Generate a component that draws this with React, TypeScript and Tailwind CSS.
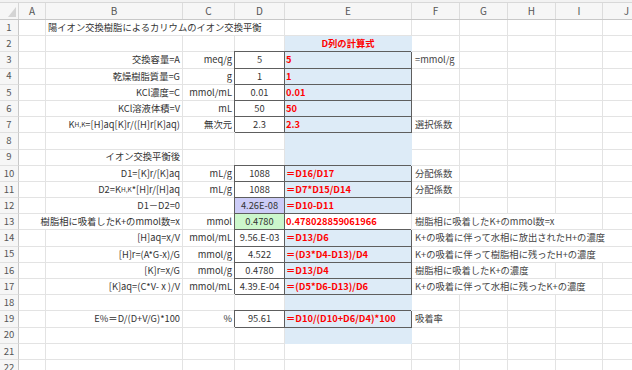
import type { ReactNode } from 'react';

type RowSpec = {
  b?: ReactNode;
  bSpan?: 'AB' | 'BD';
  c?: string;
  d?: string;
  dBox?: boolean;
  dBg?: string;
  e?: ReactNode;
  eBox?: boolean;
  eFill?: boolean;
  eCenter?: boolean;
  f?: string;
  fSpan?: 1 | 3 | 4 | 5;
};

const grid = 'border-r border-b border-[#e3e3e3]';
const boxed = 'border-r border-b border-[#5e5e5e] shadow-[-1px_-1px_0_0_#5e5e5e]';
const cellBase = 'h-full shrink-0 flex items-center whitespace-nowrap overflow-visible';

const KHK = (
  <>
    K<span className="text-[6.5px]">H,K</span>
  </>
);

const red = (s: string) => <span className="font-bold text-[#ff0000]">{s}</span>;

const rows: RowSpec[] = [
  { b: '陽イオン交換樹脂によるカリウムのイオン交換平衡', bSpan: 'BD' },
  { e: 'D列の計算式', eFill: true, eCenter: true },
  { b: '交換容量=A', c: 'meq/g', d: '5', dBox: true, e: red('5'), eBox: true, f: '=mmol/g' },
  { b: '乾燥樹脂質量=G', c: 'g', d: '1', dBox: true, e: red('1'), eBox: true },
  { b: 'KCl濃度=C', c: 'mmol/mL', d: '0.01', dBox: true, e: red('0.01'), eBox: true },
  { b: 'KCl溶液体積=V', c: 'mL', d: '50', dBox: true, e: red('50'), eBox: true },
  { b: <>{KHK}=[H]aq[K]r/([H]r[K]aq)</>, c: '無次元', d: '2.3', dBox: true, e: red('2.3'), eBox: true, f: '選択係数' },
  { eFill: true },
  { b: 'イオン交換平衡後', eFill: true },
  { b: 'D1=[K]r/[K]aq', c: 'mL/g', d: '1088', dBox: true, e: red('＝D16/D17'), eBox: true, f: '分配係数' },
  { b: <>D2={KHK}*[H]r/[H]aq</>, c: 'mL/g', d: '1088', dBox: true, e: red('＝D7*D15/D14'), eBox: true, f: '分配係数' },
  { b: 'D1－D2=0', d: '4.26E-08', dBox: true, dBg: 'bg-[#ccccf7]', e: red('＝D10-D11'), eBox: true },
  { b: '樹脂相に吸着したK+のmmol数=x', bSpan: 'AB', c: 'mmol', d: '0.4780', dBox: true, dBg: 'bg-[#ccf7cc]', e: red('0.478028859061966'), f: '樹脂相に吸着したK+のmmol数=x', fSpan: 4 },
  { b: '[H]aq=x/V', c: 'mmol/mL', d: '9.56.E-03', dBox: true, e: red('＝D13/D6'), eBox: true, f: 'K+の吸着に伴って水相に放出されたH+の濃度', fSpan: 5 },
  { b: '[H]r=(A*G-x)/G', c: 'mmol/g', d: '4.522', dBox: true, e: red('＝(D3*D4-D13)/D4'), eBox: true, f: 'K+の吸着に伴って樹脂相に残ったH+の濃度', fSpan: 5 },
  { b: '[K]r=x/G', c: 'mmol/g', d: '0.4780', dBox: true, e: red('＝D13/D4'), eBox: true, f: '樹脂相に吸着したK+の濃度', fSpan: 3 },
  { b: '[K]aq=(C*V- x )/V', c: 'mmol/mL', d: '4.39.E-04', dBox: true, e: red('＝(D5*D6-D13)/D6'), eBox: true, f: 'K+の吸着に伴って水相に残ったK+の濃度', fSpan: 4 },
  { eFill: true },
  { b: 'E%＝D/(D+V/G)*100', c: '%', d: '95.61', dBox: true, e: red('＝D10/(D10+D6/D4)*100'), eBox: true, f: '吸着率' },
  { eFill: true },
  {},
  {},
];

const fWidth: Record<number, string> = {
  1: 'w-[48px]',
  3: 'w-[144px]',
  4: 'w-[191px]',
  5: 'w-[239px]',
};

const tailCols = [
  { key: 'G', w: 'w-[48px]' },
  { key: 'H', w: 'w-[48px]' },
  { key: 'I', w: 'w-[47px]' },
  { key: 'J', w: 'w-[48px]' },
];

const Row = ({ n, r }: { n: number; r: RowSpec }) => {
  const span = r.fSpan ?? 1;
  const eCls = r.eBox
    ? boxed + ' bg-[#ddebf7]'
    : r.eFill
      ? 'border-r border-b border-[#ddebf7] bg-[#ddebf7]'
      : grid;

  return (
    <div className="flex h-[16.2px]">
      <div className="w-[19px] h-full shrink-0 flex items-center justify-center text-[9.5px] text-[#555] bg-[#f6f6f6] border-r border-b border-r-[#c8c8c8] border-b-[#e0e0e0]">
        {n}
      </div>

      {r.bSpan === 'AB' ? (
        <div className={`${cellBase} ${grid} w-[164px] justify-end pr-[2px]`}>{r.b}</div>
      ) : (
        <>
          <div className={`${cellBase} ${grid} w-[27px]`} />
          {r.bSpan === 'BD' ? (
            <div className={`${cellBase} ${grid} w-[239px] pl-[2px]`}>{r.b}</div>
          ) : (
            <div className={`${cellBase} ${grid} w-[137px] justify-end pr-[2px]`}>{r.b}</div>
          )}
        </>
      )}

      {r.bSpan !== 'BD' && (
        <>
          <div className={`${cellBase} ${grid} w-[52px] justify-end pr-[2px]`}>{r.c}</div>
          <div className={`${cellBase} ${r.dBox ? boxed : grid} ${r.dBg ?? ''} w-[50px] justify-center`}>
            {r.d}
          </div>
        </>
      )}

      <div className={`${cellBase} ${eCls} w-[127px] ${r.eCenter ? 'justify-center font-bold text-[#ff0000]' : 'pl-[1px]'}`}>
        {r.e}
      </div>

      <div className={`${cellBase} ${grid} ${fWidth[span]} pl-[3px] text-[#444]`}>{r.f}</div>

      {tailCols.slice(span - 1).map((c) => (
        <div key={c.key} className={`${cellBase} ${grid} ${c.w}`} />
      ))}
    </div>
  );
};

const headers = [
  { l: 'A', w: 'w-[27px]' },
  { l: 'B', w: 'w-[137px]' },
  { l: 'C', w: 'w-[52px]' },
  { l: 'D', w: 'w-[50px]' },
  { l: 'E', w: 'w-[127px]' },
  { l: 'F', w: 'w-[48px]' },
  { l: 'G', w: 'w-[48px]' },
  { l: 'H', w: 'w-[48px]' },
  { l: 'I', w: 'w-[47px]' },
  { l: 'J', w: 'w-[48px]' },
];

export default function App() {
  return (
    <div className="w-[632px] h-[370px] overflow-hidden bg-white text-[9.3px] leading-none text-[#333] font-['Noto_Sans_CJK_JP',sans-serif]">
      {/* top strip */}
      <div className="h-[3px] bg-[#f2f2f2] border-b border-[#d8d8d8]" />

      {/* column headers */}
      <div className="flex h-[17px] bg-[#f6f6f6] border-b border-[#c8c8c8]">
        <div className="w-[19px] shrink-0 h-full border-r border-[#d6d6d6] flex items-end justify-end pr-[2px] pb-[2px]">
          <svg width="8" height="10" viewBox="0 0 8 10">
            <polygon points="0,10 8,10 8,0" fill="#d4d4d4" />
          </svg>
        </div>
        {headers.map((h) => (
          <div
            key={h.l}
            className={`${h.w} shrink-0 h-full border-r border-[#dcdcdc] flex items-center justify-center text-[10px] text-[#555]`}
          >
            {h.l}
          </div>
        ))}
      </div>

      {rows.map((r, i) => (
        <Row key={i} n={i + 1} r={r} />
      ))}
    </div>
  );
}
